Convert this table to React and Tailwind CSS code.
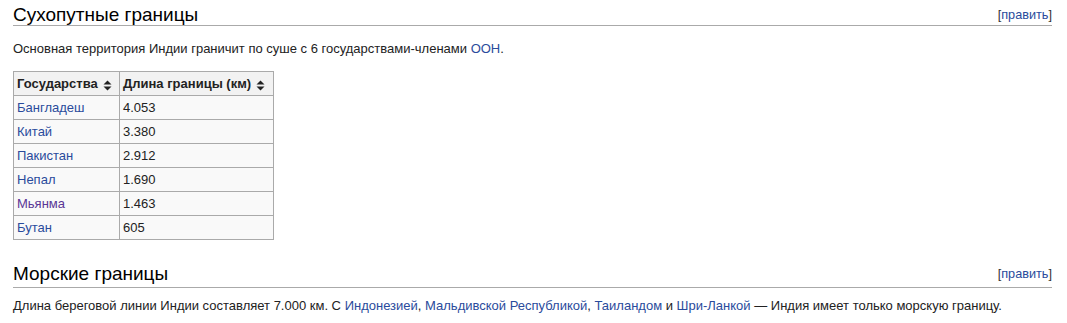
import React from "react";

const link = "text-[#2a4b9c]";
const visited = "text-[#5a3696]";

const rows = [
  { name: "Бангладеш", len: "4.053" },
  { name: "Китай", len: "3.380" },
  { name: "Пакистан", len: "2.912" },
  { name: "Непал", len: "1.690" },
  { name: "Мьянма", len: "1.463", visited: true },
  { name: "Бутан", len: "605" },
];

const SortIcon = () => (
  <svg width="9" height="11" viewBox="0 0 9 11" className="inline-block ml-[5px] -mb-[1px]">
    <path d="M4.5 0.5 L8.5 4.5 L0.5 4.5 Z" fill="#222" />
    <path d="M4.5 10.5 L8.5 6.5 L0.5 6.5 Z" fill="#222" />
  </svg>
);

const EditLink = ({ className }) => (
  <span className={`text-[12.7px] leading-[16px] text-[#333] ${className}`}>
    [<span className={link}>править</span>]
  </span>
);

const App = () => {
  return (
    <div
      className="w-[1067px] h-[323px] bg-white pl-[13px] pr-[15px] text-[#222] overflow-hidden"
      style={{ fontFamily: '"Liberation Sans", Arial, sans-serif' }}
    >
      <div className="flex justify-between items-end border-b border-[#aaa] pt-[4px]">
        <h2 className="text-[19px] leading-[21px] font-normal text-black">Сухопутные границы</h2>
        <EditLink className="pb-[2px]" />
      </div>

      <p className="mt-[13px] text-[13px] leading-[19px]">
        Основная территория Индии граничит по суше с 6 государствами-членами{" "}
        <span className={link}>ООН</span>.
      </p>

      <table className="mt-[13px] border-collapse border border-[#aaa] text-[13px] leading-[17px]">
        <thead>
          <tr className="bg-[#f2f2f2]">
            <th className="w-[106px] border border-[#aaa] py-[3px] pl-[3px] pr-[4px] text-left font-bold whitespace-nowrap">
              Государства
              <SortIcon />
            </th>
            <th className="w-[154px] border border-[#aaa] py-[3px] pl-[3px] pr-[4px] text-left font-bold whitespace-nowrap">
              Длина границы (км)
              <SortIcon />
            </th>
          </tr>
        </thead>
        <tbody>
          {rows.map((r) => (
            <tr key={r.name} className="bg-[#f9f9f9]">
              <td className={`border border-[#aaa] py-[3px] px-[3px] ${r.visited ? visited : link}`}>
                {r.name}
              </td>
              <td className="border border-[#aaa] py-[3px] px-[3px]">{r.len}</td>
            </tr>
          ))}
        </tbody>
      </table>

      <div className="mt-[19px] flex justify-between items-end border-b border-[#aaa] pt-[4px]">
        <h2 className="text-[19px] leading-[21px] pb-[3px] font-normal text-black">Морские границы</h2>
        <EditLink className="pb-[5px]" />
      </div>

      <p className="mt-[8px] text-[13px] leading-[19px]">
        Длина береговой линии Индии составляет 7.000 км. С{" "}
        <span className={link}>Индонезией</span>, <span className={link}>Мальдивской Республикой</span>,{" "}
        <span className={link}>Таиландом</span> и <span className={link}>Шри-Ланкой</span> — Индия имеет
        только морскую границу.
      </p>
    </div>
  );
};

export default App;
